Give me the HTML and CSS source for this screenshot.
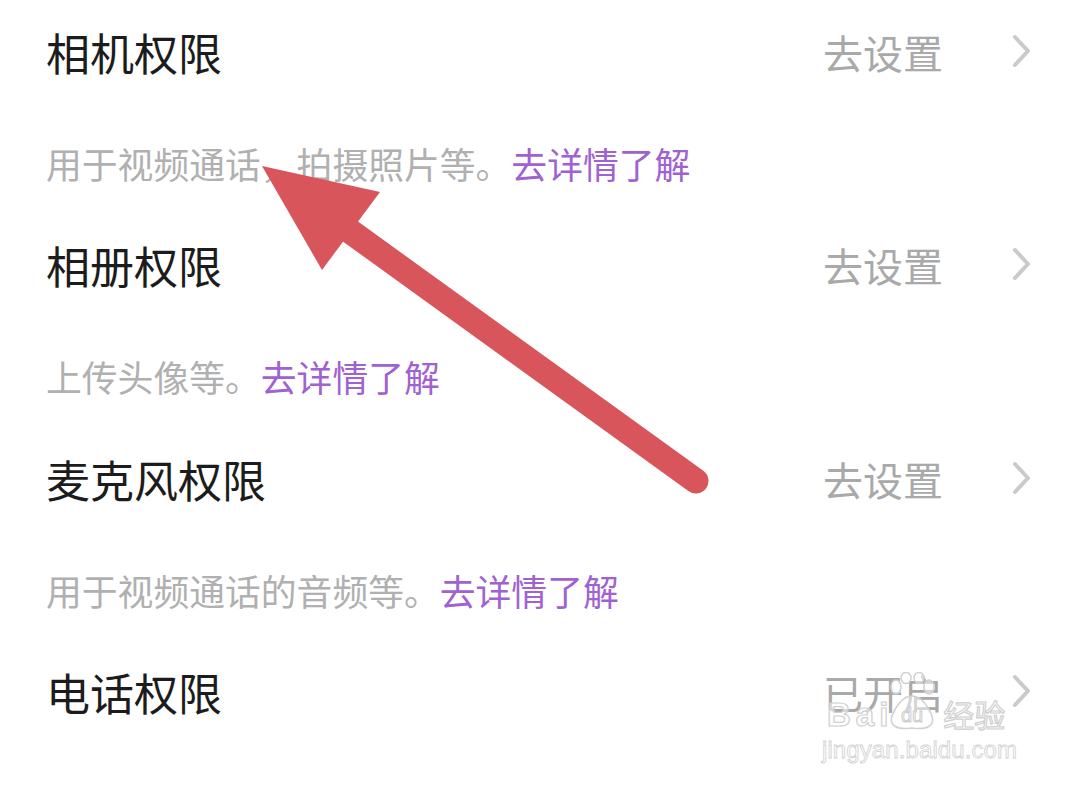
FILE: index.html
```html
<!DOCTYPE html>
<html lang="zh">
<head>
<meta charset="utf-8">
<title>权限设置</title>
<link rel="stylesheet" href="styles.css">
</head>
<body>
<div class="page">
  <div class="list">
    <div class="item">
      <div class="row">
        <span class="title">相机权限</span>
        <span class="action">去设置<svg class="chev" viewBox="0 0 20 34" width="20" height="34"><path d="M3 3 L16 17 L3 31" fill="none" stroke="#cacaca" stroke-width="4" stroke-linecap="round" stroke-linejoin="round"/></svg></span>
      </div>
      <p class="desc">用于视频通话，拍摄照片等。<a class="link">去详情了解</a></p>
    </div>
    <div class="item">
      <div class="row">
        <span class="title">相册权限</span>
        <span class="action">去设置<svg class="chev" viewBox="0 0 20 34" width="20" height="34"><path d="M3 3 L16 17 L3 31" fill="none" stroke="#cacaca" stroke-width="4" stroke-linecap="round" stroke-linejoin="round"/></svg></span>
      </div>
      <p class="desc">上传头像等。<a class="link">去详情了解</a></p>
    </div>
    <div class="item">
      <div class="row">
        <span class="title">麦克风权限</span>
        <span class="action">去设置<svg class="chev" viewBox="0 0 20 34" width="20" height="34"><path d="M3 3 L16 17 L3 31" fill="none" stroke="#cacaca" stroke-width="4" stroke-linecap="round" stroke-linejoin="round"/></svg></span>
      </div>
      <p class="desc">用于视频通话的音频等。<a class="link">去详情了解</a></p>
    </div>
    <div class="item">
      <div class="row">
        <span class="title">电话权限</span>
        <span class="action">已开启<svg class="chev" viewBox="0 0 20 34" width="20" height="34"><path d="M3 3 L16 17 L3 31" fill="none" stroke="#cacaca" stroke-width="4" stroke-linecap="round" stroke-linejoin="round"/></svg></span>
      </div>
    </div>
  </div>

  <svg class="arrow" viewBox="0 0 1076 788" width="1076" height="788">
    <line x1="696" y1="481" x2="340" y2="224" stroke="#d9555c" stroke-width="25" stroke-linecap="round"/>
    <polygon points="262,166 380,192 322,270" fill="#d9555c"/>
  </svg>

  <div class="watermark">
    <div class="wm-top">
      <span class="wm-bai">Bai</span>
      <svg class="wm-paw" viewBox="0 0 50 58" width="50" height="58">
        <g fill="rgba(255,255,255,0.5)" stroke="#d0d0d0" stroke-width="1.5">
          <ellipse cx="9" cy="15" rx="5" ry="7"/>
          <ellipse cx="19" cy="6" rx="5" ry="5.5"/>
          <ellipse cx="32" cy="6" rx="5" ry="5.5"/>
          <ellipse cx="42" cy="15" rx="5" ry="7"/>
          <path d="M25 24 C15 24 8 36 5 44 C2 54 10 58 25 56 C40 58 48 54 45 44 C42 36 35 24 25 24 Z"/>
        </g>
        <text x="25" y="50" text-anchor="middle" class="wm-du">du</text>
      </svg>
      <span class="wm-jy">经验</span>
    </div>
    <div class="wm-url">jingyan.baidu.com</div>
  </div>
</div>
</body>
</html>
```
FILE: styles.css
```css
* { box-sizing: border-box; }
html, body {
  margin: 0;
  padding: 0;
  background: #ffffff;
}
body {
  font-family: "Noto Sans CJK SC", "Noto Sans", sans-serif;
  width: 1076px;
  height: 788px;
  overflow: hidden;
}
.page {
  position: relative;
  width: 1076px;
  height: 788px;
  overflow: hidden;
}
.list {
  display: flex;
  flex-direction: column;
  padding: 0 44px 0 46px;
}
.item {
  padding-bottom: 26.3px;
}
.row {
  height: 104px;
  display: flex;
  align-items: center;
  justify-content: space-between;
}
.title {
  font-size: 44px;
  line-height: 48px;
  color: #1c1c1c;
}
.action {
  display: flex;
  align-items: center;
  gap: 69px;
  font-size: 40px;
  line-height: 48px;
  color: #a9a9a9;
}
.chev {
  display: block;
  margin-top: -2px;
}
.desc {
  margin: 35px 0 0;
  font-size: 35.8px;
  line-height: 48px;
  color: #b0b0b0;
  white-space: nowrap;
}
.link {
  color: #a062d2;
}
.arrow {
  position: absolute;
  left: 0;
  top: 0;
  pointer-events: none;
}
.watermark {
  position: absolute;
  left: 822px;
  top: 672px;
  width: 210px;
  display: flex;
  flex-direction: column;
  align-items: flex-start;
  font-family: "Liberation Sans", Arial, sans-serif;
  pointer-events: none;
}
.wm-top {
  display: flex;
  align-items: flex-end;
  height: 58px;
}
.wm-bai {
  margin-left: 5px;
  font-size: 33px;
  line-height: 30px;
  font-weight: 700;
  letter-spacing: 5px;
  color: rgba(255,255,255,0.55);
  -webkit-text-stroke: 1.2px #cfcfcf;
}
.wm-paw {
  display: block;
  margin: 0 6px 0 -6px;
}
.wm-du {
  font-family: "Liberation Sans", Arial, sans-serif;
  font-size: 20px;
  fill: #ffffff;
  stroke: #cccccc;
  stroke-width: 1;
}
.wm-jy {
  font-family: "Noto Sans CJK SC", sans-serif;
  font-size: 31px;
  line-height: 32px;
  color: rgba(255,255,255,0.55);
  -webkit-text-stroke: 1.2px #cfcfcf;
}
.wm-url {
  margin-top: 6px;
  font-size: 24px;
  line-height: 28px;
  letter-spacing: 0.1px;
  color: #ffffff;
  -webkit-text-stroke: 0.8px #d0d0d0;
}
```
